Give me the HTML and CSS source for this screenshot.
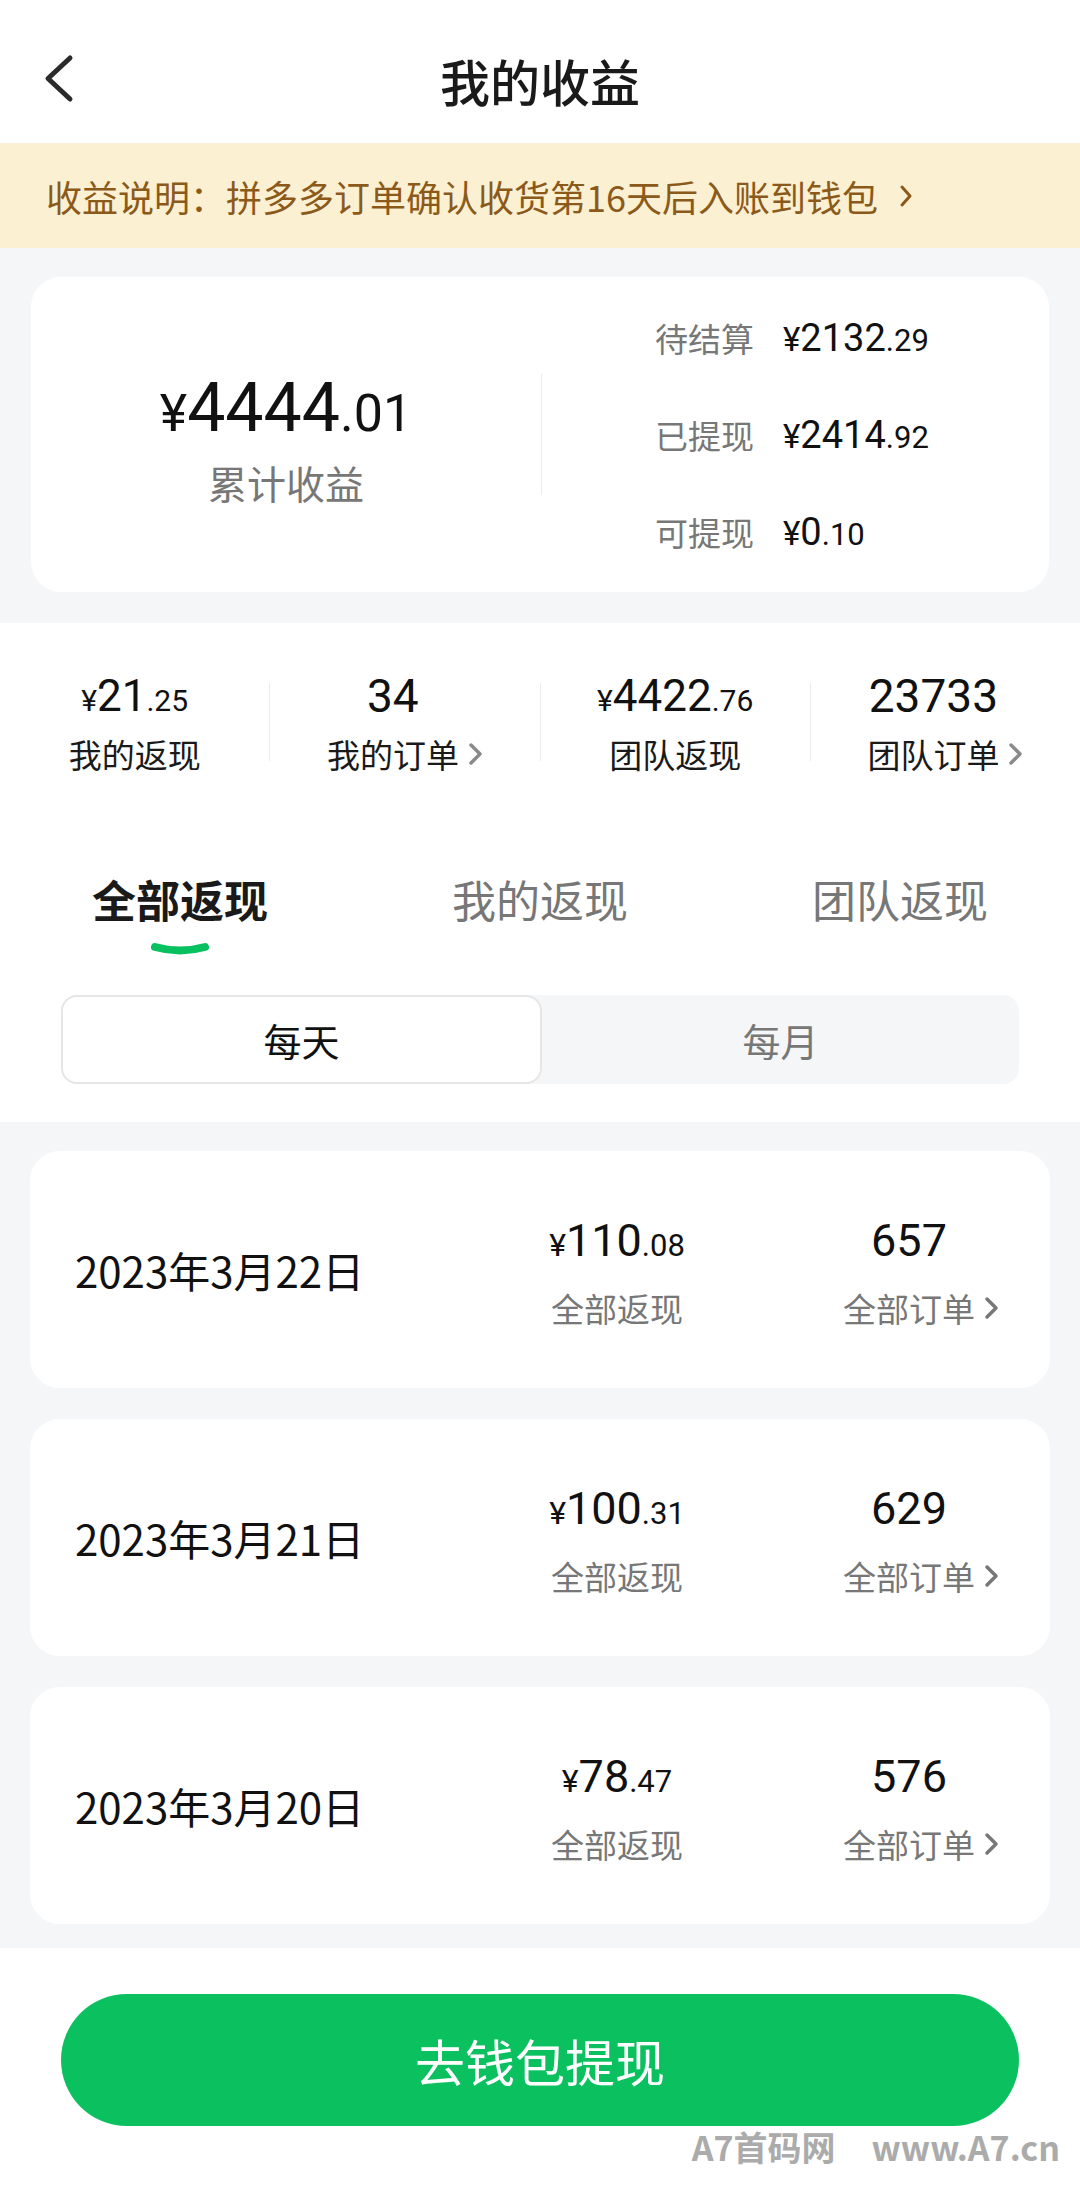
FILE: index.html
```html
<!DOCTYPE html>
<html lang="zh-CN">
<head>
    <meta charset="UTF-8">
    <meta name="viewport" content="width=device-width, initial-scale=1.0">
    <title>我的收益</title>
    <link rel="stylesheet" href="styles.css">
</head>
<body>

<header class="topbar">
    <a class="back" href="#">
        <svg width="34" height="49" viewBox="0 0 34 49"><polyline points="28,4 6,24.5 28,45" fill="none" stroke="#2b2b2b" stroke-width="5" stroke-linecap="round" stroke-linejoin="round"/></svg>
    </a>
    <h1 class="title">我的收益</h1>
    <span></span>
</header>

<div class="notice">
    <span>收益说明：拼多多订单确认收货第16天后入账到钱包</span>
    <svg class="notice-arrow" width="16" height="28" viewBox="0 0 16 28"><polyline points="4,5 12,14 4,23" fill="none" stroke="#8b5a1a" stroke-width="3" stroke-linecap="round" stroke-linejoin="round"/></svg>
</div>

<section class="summary-wrap">
    <div class="summary-card">
        <div class="total">
            <div class="money total-money"><span class="yen">¥</span><span class="int">4444</span><span class="dec">.01</span></div>
            <div class="total-label">累计收益</div>
        </div>
        <div class="vline"></div>
        <ul class="breakdown">
            <li><span class="k">待结算</span><span class="money"><span class="yen">¥</span><span class="int">2132</span><span class="dec">.29</span></span></li>
            <li><span class="k">已提现</span><span class="money"><span class="yen">¥</span><span class="int">2414</span><span class="dec">.92</span></span></li>
            <li><span class="k">可提现</span><span class="money"><span class="yen">¥</span><span class="int">0</span><span class="dec">.10</span></span></li>
        </ul>
    </div>
</section>

<section class="panel">
    <div class="stats">
        <div class="stat">
            <div class="money stat-val"><span class="yen">¥</span><span class="int">21</span><span class="dec">.25</span></div>
            <div class="stat-label">我的返现</div>
        </div>
        <i class="sep"></i>
        <div class="stat">
            <div class="money stat-val count has-arrow">34</div>
            <div class="stat-label">我的订单<svg class="arrow" width="16" height="24" viewBox="0 0 16 24"><polyline points="4,3 13,12 4,21" fill="none" stroke="#8a8a8a" stroke-width="3.5" stroke-linecap="round" stroke-linejoin="round"/></svg></div>
        </div>
        <i class="sep"></i>
        <div class="stat">
            <div class="money stat-val"><span class="yen">¥</span><span class="int">4422</span><span class="dec">.76</span></div>
            <div class="stat-label">团队返现</div>
        </div>
        <i class="sep"></i>
        <div class="stat">
            <div class="money stat-val count has-arrow">23733</div>
            <div class="stat-label">团队订单<svg class="arrow" width="16" height="24" viewBox="0 0 16 24"><polyline points="4,3 13,12 4,21" fill="none" stroke="#8a8a8a" stroke-width="3.5" stroke-linecap="round" stroke-linejoin="round"/></svg></div>
        </div>
    </div>

    <nav class="tabs">
        <div class="tab active">
            <span>全部返现</span>
            <svg class="tab-line" width="60" height="14" viewBox="0 0 60 14"><path d="M5 5 Q30 12 55 5" fill="none" stroke="#07c160" stroke-width="8" stroke-linecap="round"/></svg>
        </div>
        <div class="tab"><span>我的返现</span></div>
        <div class="tab"><span>团队返现</span></div>
    </nav>

    <div class="segment">
        <div class="seg active">每天</div>
        <div class="seg">每月</div>
    </div>
</section>

<section class="days">
    <div class="day-card">
        <div class="date">2023年3月22日</div>
        <div class="day-col">
            <div class="money day-val"><span class="yen">¥</span><span class="int">110</span><span class="dec">.08</span></div>
            <div class="day-label">全部返现</div>
        </div>
        <div class="day-col">
            <div class="money day-val count has-arrow">657</div>
            <div class="day-label">全部订单<svg class="arrow" width="16" height="24" viewBox="0 0 16 24"><polyline points="4,3 13,12 4,21" fill="none" stroke="#777" stroke-width="3.5" stroke-linecap="round" stroke-linejoin="round"/></svg></div>
        </div>
    </div>
    <div class="day-card">
        <div class="date">2023年3月21日</div>
        <div class="day-col">
            <div class="money day-val"><span class="yen">¥</span><span class="int">100</span><span class="dec">.31</span></div>
            <div class="day-label">全部返现</div>
        </div>
        <div class="day-col">
            <div class="money day-val count has-arrow">629</div>
            <div class="day-label">全部订单<svg class="arrow" width="16" height="24" viewBox="0 0 16 24"><polyline points="4,3 13,12 4,21" fill="none" stroke="#777" stroke-width="3.5" stroke-linecap="round" stroke-linejoin="round"/></svg></div>
        </div>
    </div>
    <div class="day-card">
        <div class="date">2023年3月20日</div>
        <div class="day-col">
            <div class="money day-val"><span class="yen">¥</span><span class="int">78</span><span class="dec">.47</span></div>
            <div class="day-label">全部返现</div>
        </div>
        <div class="day-col">
            <div class="money day-val count has-arrow">576</div>
            <div class="day-label">全部订单<svg class="arrow" width="16" height="24" viewBox="0 0 16 24"><polyline points="4,3 13,12 4,21" fill="none" stroke="#777" stroke-width="3.5" stroke-linecap="round" stroke-linejoin="round"/></svg></div>
        </div>
    </div>
</section>

<footer class="bottom">
    <button class="withdraw" type="button">去钱包提现</button>
    <div class="watermark">A7首码网<span class="wm-gap"></span>www.A7.cn</div>
</footer>

</body>
</html>
```

FILE: styles.css
```css
        body {
            margin: 0;
            width: 1080px;
            font-family: "Noto Sans CJK SC", "Noto Sans", sans-serif;
            color: #111;
            background-color: #fff;
        }

        ul {
            list-style: none;
            margin: 0;
            padding: 0;
        }

        /* top bar */
        .topbar {
            height: 143px;
            box-sizing: border-box;
            padding-top: 50px;
            display: grid;
            grid-template-columns: 1fr auto 1fr;
            align-items: start;
        }

        .back {
            display: block;
            width: 34px;
            height: 49px;
            margin: 4px 0 0 42px;
        }

        .back svg {
            display: block;
        }

        .title {
            margin: 0;
            font-size: 50px;
            line-height: 60px;
            font-weight: 500;
            color: #1a1a1a;
        }

        /* notice */
        .notice {
            height: 105px;
            background-color: #fbf0d2;
            color: #8b5a1a;
            font-size: 36px;
            display: flex;
            align-items: center;
            padding-left: 46px;
        }

        .notice-arrow {
            margin-left: 20px;
        }

        /* summary */
        .summary-wrap {
            background-color: #f5f6f8;
            padding: 29px 31px 31px;
        }

        .summary-card {
            height: 315px;
            background: #fff;
            border-radius: 30px;
            display: flex;
            align-items: center;
        }

        .money {
            font-family: Roboto, "Noto Sans", sans-serif;
            white-space: nowrap;
        }

        .total {
            flex: 0 0 510px;
            display: flex;
            flex-direction: column;
            align-items: center;
            padding-top: 6px;
        }

        .total-money {
            height: 80px;
            font-size: 68px;
            line-height: 80px;
        }

        .total-money .yen,
        .total-money .dec {
            font-size: 52px;
        }

        .total-label {
            margin-top: 9px;
            height: 50px;
            font-size: 39px;
            line-height: 50px;
            color: #777;
        }

        .vline {
            width: 1px;
            height: 121px;
            background-color: #ececec;
        }

        .breakdown {
            flex: 1;
            padding-left: 113px;
        }

        .breakdown li {
            height: 97px;
            display: flex;
            align-items: center;
        }

        .breakdown .k {
            width: 128px;
            font-size: 33px;
            color: #777;
        }

        .breakdown .money {
            font-size: 38px;
        }

        .breakdown .dec {
            font-size: 31px;
        }

        .breakdown .yen {
            font-size: 33px;
        }

        /* stats + tabs */
        .panel {
            padding: 43px 0 38px;
        }

        .stats {
            display: flex;
            align-items: center;
        }

        .stat {
            flex: 1;
            display: flex;
            flex-direction: column;
            align-items: center;
        }

        .sep {
            width: 1px;
            height: 78px;
            background-color: #ececec;
        }

        .stat-val {
            height: 60px;
            font-size: 44px;
            line-height: 60px;
            color: #111;
        }

        .stat-val .yen,
        .stat-val .dec {
            font-size: 30px;
        }

        .stat-val.count {
            font-size: 46px;
        }

        .has-arrow {
            padding-right: 24px;
        }

        .stat-label {
            margin-top: 4px;
            height: 48px;
            font-size: 33px;
            line-height: 48px;
            color: #1a1a1a;
            display: flex;
            align-items: center;
        }

        .arrow {
            margin-left: 8px;
        }

        .tabs {
            margin-top: 91px;
            display: grid;
            grid-template-columns: repeat(3, 1fr);
            height: 87px;
        }

        .tab {
            display: flex;
            flex-direction: column;
            align-items: center;
            font-size: 44px;
            line-height: 60px;
            color: #777;
        }

        .tab span {
            height: 60px;
        }

        .tab.active {
            color: #1a1a1a;
            font-weight: 700;
        }

        .tab-line {
            margin-top: 13px;
        }

        .segment {
            margin: 39px 61px 0;
            height: 89px;
            display: flex;
            background-color: #f5f6f8;
            border-radius: 16px;
        }

        .seg {
            flex: 1;
            display: flex;
            align-items: center;
            justify-content: center;
            font-size: 38px;
            color: #777;
        }

        .seg.active {
            background: #fff;
            color: #111;
            border: 2px solid #e6e6e6;
            border-radius: 16px;
        }

        /* day list */
        .days {
            background-color: #f5f6f8;
            padding: 29px 30px 24px;
            display: flex;
            flex-direction: column;
            gap: 31px;
        }

        .day-card {
            height: 237px;
            background: #fff;
            border-radius: 30px;
            display: grid;
            grid-template-columns: 1fr 200px 200px;
            column-gap: 104px;
            align-items: center;
            padding: 0 29px 0 45px;
        }

        .date {
            font-size: 42px;
            color: #111;
            white-space: nowrap;
        }

        .day-col {
            display: flex;
            flex-direction: column;
            align-items: center;
            padding-top: 4px;
        }

        .day-val {
            height: 56px;
            font-size: 45px;
            line-height: 56px;
        }

        .day-val .yen {
            font-size: 32px;
        }

        .day-val .dec {
            font-size: 31px;
        }

        .day-label {
            margin-top: 16px;
            height: 46px;
            font-size: 33px;
            line-height: 46px;
            color: #777;
            display: flex;
            align-items: center;
        }

        /* bottom */
        .bottom {
            height: 237px;
            box-sizing: border-box;
            padding-top: 46px;
            overflow: hidden;
        }

        .withdraw {
            display: block;
            width: 958px;
            height: 132px;
            margin: 0 auto;
            border: none;
            border-radius: 66px;
            background-color: #0bc15f;
            color: #fff;
            font-family: "Noto Sans CJK SC", sans-serif;
            font-size: 50px;
            cursor: pointer;
        }

        .watermark {
            margin-top: 4px;
            padding-right: 20px;
            text-align: right;
            font-size: 34px;
            line-height: 34px;
            font-weight: 700;
            color: #ababab;
        }

        .wm-gap {
            display: inline-block;
            width: 36px;
        }
```
